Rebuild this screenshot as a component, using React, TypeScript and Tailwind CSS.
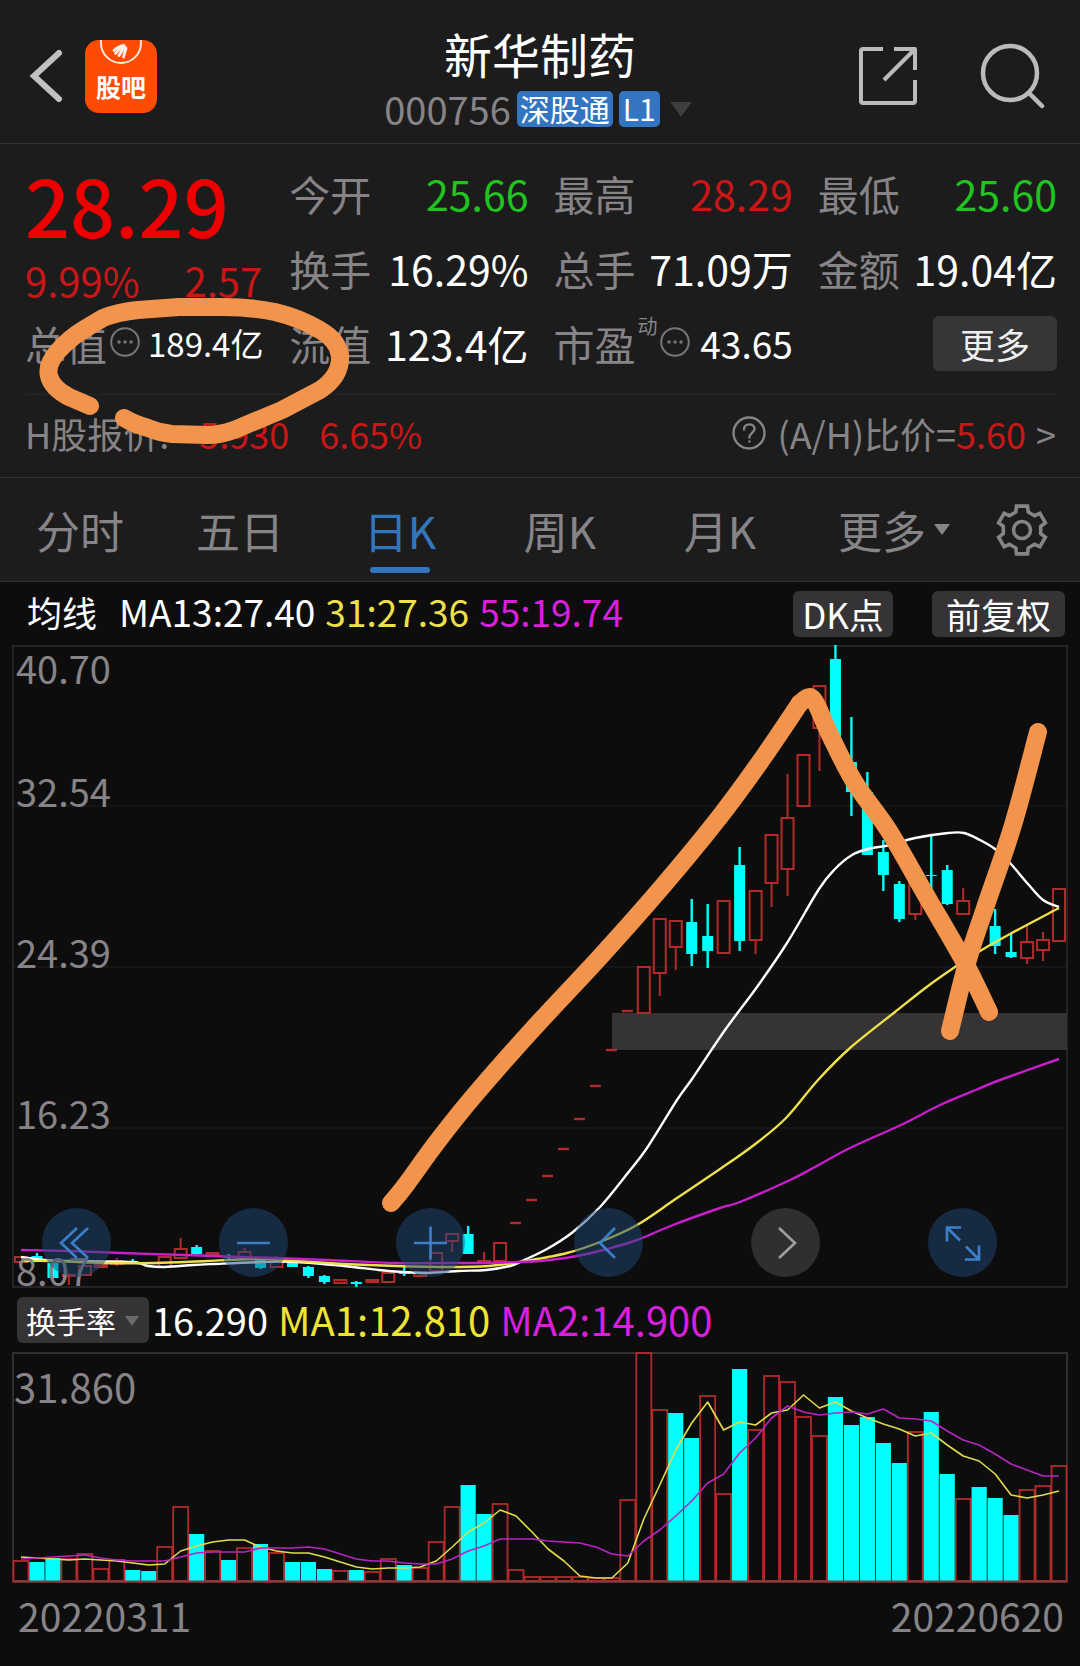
import React, { useState } from 'react';
import { clsx } from 'clsx';

const UP = '#b22a2a';
const DOWN = '#00ffff';
const MARKER = '#f2944c';

// Both plots share the same horizontal scale: 66 trading days
const DAYS = 66;
const PLOT_LEFT = 13;
const PLOT_RIGHT = 1067;
const SLOT = (PLOT_RIGHT - PLOT_LEFT) / DAYS;

type Side = 'up' | 'down';

// [day, side, high, body top, body bottom, low]
type Candle = [number, Side, number, number, number, number];

const CANDLES: Candle[] = [
    [0, 'up', 1257, 1257, 1262, 1262],
    [1, 'down', 1253, 1256, 1260, 1261],
    [2, 'down', 1263, 1263, 1278, 1278],
    [3, 'up', 1273, 1275, 1276, 1285],
    [4, 'up', 1265, 1266, 1275, 1275],
    [5, 'up', 1265, 1265, 1267, 1267],
    [6, 'up', 1258, 1261, 1264, 1266],
    [7, 'down', 1259, 1261, 1262, 1264],
    [9, 'up', 1257, 1257, 1267, 1267],
    [10, 'up', 1238, 1249, 1258, 1258],
    [11, 'down', 1245, 1247, 1254, 1255],
    [12, 'up', 1252, 1253, 1255, 1255],
    [13, 'down', 1254, 1256, 1258, 1261],
    [14, 'up', 1248, 1252, 1257, 1257],
    [15, 'down', 1257, 1257, 1268, 1269],
    [16, 'up', 1256, 1259, 1267, 1267],
    [17, 'down', 1262, 1262, 1267, 1267],
    [18, 'down', 1266, 1267, 1276, 1278],
    [19, 'down', 1275, 1276, 1282, 1284],
    [20, 'up', 1279, 1280, 1283, 1284],
    [21, 'down', 1281, 1282, 1284, 1287],
    [22, 'up', 1279, 1280, 1282, 1283],
    [23, 'up', 1271, 1273, 1282, 1282],
    [24, 'down', 1267, 1272, 1274, 1276],
    [25, 'up', 1271, 1272, 1276, 1276],
    [26, 'up', 1253, 1253, 1271, 1271],
    [27, 'up', 1234, 1234, 1241, 1252],
    [28, 'down', 1226, 1234, 1254, 1254],
    [29, 'up', 1252, 1261, 1262, 1262],
    [30, 'up', 1243, 1243, 1261, 1261],
    [31, 'up', 1223, 1223, 1223, 1223],
    [32, 'up', 1200, 1200, 1200, 1200],
    [33, 'up', 1176, 1176, 1176, 1176],
    [34, 'up', 1149, 1149, 1149, 1149],
    [35, 'up', 1119, 1119, 1119, 1119],
    [36, 'up', 1086, 1086, 1086, 1086],
    [37, 'up', 1050, 1050, 1050, 1050],
    [38, 'up', 1011, 1011, 1011, 1011],
    [39, 'up', 967, 967, 1013, 1013],
    [40, 'up', 919, 919, 973, 996],
    [41, 'up', 921, 921, 947, 970],
    [42, 'down', 899, 922, 954, 966],
    [43, 'down', 904, 936, 951, 968],
    [44, 'up', 901, 901, 953, 953],
    [45, 'down', 847, 865, 941, 951],
    [46, 'up', 891, 891, 940, 954],
    [47, 'up', 835, 835, 883, 907],
    [48, 'up', 774, 818, 869, 896],
    [49, 'up', 755, 755, 806, 806],
    [50, 'up', 686, 686, 728, 771],
    [51, 'down', 645, 659, 742, 742],
    [52, 'down', 717, 762, 792, 816],
    [53, 'down', 772, 792, 855, 855],
    [54, 'down', 840, 852, 875, 891],
    [55, 'down', 881, 884, 919, 922],
    [56, 'up', 865, 872, 914, 920],
    [57, 'down', 835, 875, 876, 892],
    [58, 'down', 865, 870, 904, 905],
    [59, 'up', 888, 901, 914, 914],
    [61, 'down', 909, 926, 946, 954],
    [62, 'down', 934, 952, 957, 958],
    [63, 'up', 926, 942, 958, 964],
    [64, 'up', 932, 940, 950, 961],
    [65, 'up', 889, 889, 941, 941],
];

const MA13 = '21,1257 45,1260 70,1261 131,1262 148,1266 165,1267 193,1265 213,1264 262,1262 296,1262 344,1266 379,1270 403,1272 427,1273 458,1271 486,1270 510,1266 522,1261 547,1249 573,1232 600,1207 627,1174 647,1148 677,1100 692,1079 725,1030 757,987 787,943 819,889 835,869 852,855 868,849 890,845 915,838 948,833 964,833 980,840 995,849 1010,863 1028,884 1043,900 1059,907';
const MA31 = '21,1261 52,1261 103,1263 155,1263 207,1261 258,1259 296,1261 344,1264 396,1266 448,1267 489,1266 520,1262 567,1253 600,1242 637,1225 677,1198 720,1169 754,1145 786,1118 818,1080 850,1048 895,1012 928,986 955,967 980,951 1010,934 1059,908';
const MA55 = '21,1250 69,1251 121,1253 183,1255 241,1257 275,1258 327,1260 396,1263 448,1263 482,1263 517,1262 540,1261 577,1256 607,1249 637,1240 673,1225 720,1208 740,1202 788,1181 815,1167 850,1148 903,1124 940,1105 978,1089 1000,1080 1059,1059';

// [side, top] for each day, bars stand on the bottom line of the plot
const TURNOVER: [Side, number][] = [
    ['up', 1561], ['down', 1562], ['down', 1558], ['up', 1559], ['up', 1554], ['up', 1569],
    ['up', 1560], ['down', 1570], ['down', 1571], ['up', 1547], ['up', 1507], ['down', 1534],
    ['up', 1551], ['down', 1560], ['up', 1548], ['down', 1544], ['up', 1553], ['down', 1562],
    ['down', 1562], ['down', 1569], ['up', 1571], ['down', 1570], ['up', 1572], ['up', 1559],
    ['down', 1565], ['up', 1568], ['up', 1542], ['up', 1507], ['down', 1485], ['down', 1514],
    ['up', 1504], ['up', 1570], ['up', 1577], ['up', 1577], ['up', 1577], ['up', 1577],
    ['up', 1578], ['up', 1578], ['up', 1500], ['up', 1353], ['up', 1410], ['down', 1413],
    ['down', 1438], ['up', 1396], ['up', 1494], ['down', 1369], ['up', 1430], ['up', 1376],
    ['up', 1382], ['up', 1417], ['up', 1436], ['down', 1397], ['down', 1425], ['down', 1417],
    ['down', 1443], ['down', 1463], ['up', 1432], ['down', 1412], ['down', 1474], ['up', 1499],
    ['down', 1487], ['down', 1498], ['down', 1515], ['up', 1490], ['up', 1486], ['up', 1466],
];

const TURNOVER_MA1 = [
    1557, 1558, 1559, 1560, 1559, 1560, 1561, 1563, 1565, 1564, 1551, 1546, 1542, 1540, 1540, 1547, 1551, 1553, 1553, 1557, 1562, 1567,
    1569, 1568, 1568, 1567, 1561, 1547, 1532, 1523, 1510, 1516, 1532, 1549, 1561, 1576, 1578, 1578, 1563, 1519, 1485, 1450, 1423, 1402,
    1430, 1422, 1425, 1413, 1410, 1395, 1408, 1402, 1411, 1418, 1424, 1429, 1436, 1433, 1445, 1456, 1461, 1474, 1495, 1498, 1495, 1491,
];
const TURNOVER_MA2 = [
    1559, 1558, 1557, 1556, 1555, 1558, 1560, 1561, 1561, 1561, 1557, 1553, 1552, 1552, 1552, 1548, 1548, 1548, 1547, 1549, 1554, 1559,
    1561, 1561, 1563, 1564, 1564, 1559, 1551, 1546, 1539, 1539, 1539, 1541, 1542, 1543, 1547, 1554, 1556, 1541, 1530, 1516, 1501, 1483,
    1474, 1453, 1438, 1418, 1406, 1412, 1415, 1413, 1412, 1414, 1409, 1418, 1419, 1421, 1431, 1440, 1445, 1454, 1464, 1470, 1476, 1476,
];

const centerOf = (day: number) => PLOT_LEFT + SLOT * (day + 0.5);
const toPoints = (values: number[]) => values.map((y, day) => `${centerOf(day)},${y}`).join(' ');

// Catmull-Rom spline through the points, as a path of cubic curves
const smooth = (points: string) => {
    const p = points.split(' ').map(pair => pair.split(',').map(Number));
    let d = `M${p[0][0]} ${p[0][1]}`;
    for (let i = 0; i < p.length - 1; i++) {
        const before = p[i - 1] ?? p[i];
        const after = p[i + 2] ?? p[i + 1];
        const c1 = [p[i][0] + (p[i + 1][0] - before[0]) / 6, p[i][1] + (p[i + 1][1] - before[1]) / 6];
        const c2 = [p[i + 1][0] - (after[0] - p[i][0]) / 6, p[i + 1][1] - (after[1] - p[i][1]) / 6];
        d += `C${c1.join(' ')} ${c2.join(' ')} ${p[i + 1].join(' ')}`;
    }
    return d;
};

const TABS = ['分时', '五日', '日K', '周K', '月K'];

const Caret: React.FC<{ className?: string }> = ({ className }) => (
    <svg viewBox="0 0 20 14" className={className} fill="currentColor" aria-hidden="true">
        <path d="M0 0h20L10 14z" />
    </svg>
);

const DotsIcon: React.FC = () => (
    <svg viewBox="0 0 30 30" className="size-[30px] shrink-0 text-[#777577]" fill="none" stroke="currentColor" strokeWidth="2" aria-hidden="true">
        <circle cx="15" cy="15" r="13.8" />
        <path d="M9 15h.1M15 15h.1M21 15h.1" strokeWidth="3.4" strokeLinecap="round" />
    </svg>
);

const BoardLogo: React.FC = () => (
    <svg viewBox="0 0 72 73" className="w-[72px] h-[73px]" role="img" aria-label="股吧">
        <rect width="72" height="73" rx="14" fill="#ff4b04" />
        <path d="M16 0v3a20 20 0 0 0 40 0V0" fill="none" stroke="#ffe9dd" strokeWidth="2" />
        <g fill="none" stroke="#fff3ec" strokeWidth="2.8" strokeLinecap="round">
            <path d="M29 10.500q4-4 10-5" />
            <path d="M30.500 13.500q3.500-4.500 8.500-7" />
            <path d="M34 15.500q2.500-4.500 6-8.500" />
            <path d="M38.500 17q1.500-5 2.500-9" />
        </g>
        <text x="36" y="57" textAnchor="middle" fontSize="25" fontWeight="700" fill="#fff">股吧</text>
    </svg>
);

const GearIcon: React.FC = () => {
    const point = (deg: number, r: number) => {
        const rad = (deg * Math.PI) / 180;
        return `${(27 + r * Math.sin(rad)).toFixed(1)},${(27 - r * Math.cos(rad)).toFixed(1)}`;
    };
    const outline = [0, 60, 120, 180, 240, 300]
        .flatMap(a => [point(a - 19, 19), point(a - 13, 24.5), point(a + 13, 24.5), point(a + 19, 19)])
        .join(' ');
    return (
        <svg viewBox="0 0 54 54" className="size-[54px]" fill="none" stroke="currentColor" strokeWidth="3.600" aria-hidden="true">
            <polygon points={outline} />
            <circle cx="27" cy="27" r="8.5" />
        </svg>
    );
};

const Header: React.FC = () => (
    <header className="grid grid-cols-[1fr_auto_1fr] h-[144px] pl-7 pr-[34px] border-b border-[#353435]">
        <div className="flex items-center gap-[21px] pt-[9px]">
            <button type="button" aria-label="返回" className="text-[#c2c1c2]">
                <svg viewBox="0 0 36 56" className="w-[36px] h-[56px]" fill="none" stroke="currentColor" strokeWidth="6" strokeLinecap="round">
                    <path d="M31 5L6 28l25 23" />
                </svg>
            </button>
            <a href="#guba"><BoardLogo /></a>
        </div>
        <div className="flex flex-col items-center pt-[25px]">
            <h1 className="pl-[6px] text-[48px] leading-[56px] text-white">新华制药</h1>
            <div className="flex items-center gap-[6px] mt-[10px] pl-[2px]">
                <span className="text-[38px] leading-[36px] text-[#868486]">000756</span>
                <span className="h-[36px] px-[3px] rounded-[5px] bg-[#3375c0] text-[30px] leading-[34px] text-white">深股通</span>
                <span className="h-[36px] px-1 rounded-[5px] bg-[#3375c0] text-[30px] leading-[34px] text-white">L1</span>
                <button type="button" aria-label="切换股票" className="pl-1 text-[#3f3e3f]">
                    <Caret className="w-[22px] h-[15px]" />
                </button>
            </div>
        </div>
        <div className="flex items-center justify-end gap-[61px] pt-[9px] text-[#bcbbbc]">
            <button type="button" aria-label="分享">
                <svg viewBox="0 0 62 60" className="w-[62px] h-[60px]" fill="none" stroke="currentColor" strokeWidth="4" strokeLinejoin="round">
                    <path d="M26 3H6a2 2 0 0 0-2 2v50a2 2 0 0 0 2 2h50a2 2 0 0 0 2-2V34" />
                    <path d="M37 3h21v21M57 4L27 34" />
                </svg>
            </button>
            <button type="button" aria-label="搜索">
                <svg viewBox="0 0 66 66" className="size-[66px]" fill="none" stroke="currentColor" strokeWidth="4.5" strokeLinecap="round">
                    <circle cx="30" cy="30" r="27" />
                    <path d="M49 50l13 13" />
                </svg>
            </button>
        </div>
    </header>
);

interface QuoteItemProps {
    label: string;
    value: string;
    tone?: 'red' | 'green' | 'white';
}

const QuoteItem: React.FC<QuoteItemProps> = ({ label, value, tone = 'white' }) => (
    <div className="flex items-center justify-between whitespace-nowrap text-[41px]">
        <span className="text-[#868486]">{label}</span>
        <span
            className={clsx(
                tone === 'red' && 'text-[#c91616]',
                tone === 'green' && 'text-[#1fc41f]',
                tone === 'white' && 'text-white'
            )}
        >
            {value}
        </span>
    </div>
);

const Quote: React.FC = () => (
    <section className="relative">
        <div className="ml-[25px] mr-[23px] pt-[12px] pb-[13px] grid grid-cols-4 auto-rows-[75px] gap-x-[25px] border-b border-[#272627]">
            <div className="row-span-2 flex flex-col whitespace-nowrap">
                <strong className="text-[79px] leading-[96px] font-medium text-[#ee0000]">28.29</strong>
                <div className="flex justify-between pr-[2px] text-[40px] leading-[56px] text-[#c91616]">
                    <span>9.99%</span>
                    <span>2.57</span>
                </div>
            </div>
            <QuoteItem label="今开" value="25.66" tone="green" />
            <QuoteItem label="最高" value="28.29" tone="red" />
            <QuoteItem label="最低" value="25.60" tone="green" />
            <QuoteItem label="换手" value="16.29%" />
            <QuoteItem label="总手" value="71.09万" />
            <QuoteItem label="金额" value="19.04亿" />

            <div className="flex items-center whitespace-nowrap">
                <span className="text-[41px] text-[#868486]">总值</span>
                <span className="pl-[3px] pb-1"><DotsIcon /></span>
                <span className="pl-2 text-[33px] text-white">189.4亿</span>
            </div>
            <QuoteItem label="流值" value="123.4亿" />
            <div className="flex items-center justify-between whitespace-nowrap">
                <div className="flex items-center">
                    <span className="text-[41px] text-[#868486]">市盈</span>
                    <sup className="px-[2px] mb-4 text-[20px] text-[#868486]">动</sup>
                    <span className="pb-1"><DotsIcon /></span>
                </div>
                <span className="text-[37px] text-white">43.65</span>
            </div>
            <div className="flex items-center justify-end">
                <button type="button" className="w-[124px] h-[55px] rounded-md bg-[#363537] text-[35px] leading-[50px] text-[#eeeeee]">更多</button>
            </div>
        </div>

        <div className="flex items-center justify-between h-[83px] pl-[25px] pr-[24px] pb-[6px] border-b border-[#353435] text-[36px] whitespace-nowrap">
            <div className="flex items-center">
                <span className="text-[#868486]">H股报价:</span>
                <span className="pl-[30px] text-[#c91616]">5.930</span>
                <span className="pl-[30px] text-[#c91616]">6.65%</span>
            </div>
            <a href="#ah" className="flex items-center text-[#868486]">
                <svg viewBox="0 0 34 34" className="size-[34px] mr-3" fill="none" stroke="currentColor" strokeWidth="2.4" aria-hidden="true">
                    <circle cx="17" cy="17" r="15.5" />
                    <path d="M12 13.5c0-7 10.500-6.500 10.500-.5 0 3.500-5 4-5 8.500" strokeLinecap="round" />
                    <circle cx="17.400" cy="25.500" r="1.200" fill="currentColor" stroke="none" />
                </svg>
                <span>(A/H)比价=</span>
                <span className="text-[#c91616]">5.60</span>
                <span className="pl-[10px]">&gt;</span>
            </a>
        </div>

        {/* hand-drawn ring round the market value */}
        <svg viewBox="0 144 1080 334" className="absolute inset-x-0 top-0 w-full pointer-events-none" fill="none" stroke={MARKER} strokeWidth="18" strokeLinecap="round" strokeLinejoin="round" aria-hidden="true">
            <path d="M90 406L69 397Q52 388 49 376Q46 364 59 350Q70 338 83 330L103 318Q118 312 138 310L179 307H224Q250 307 275 312Q300 318 320 330Q338 340 340 356Q341 376 320 390L282 410L234 430Q220 435 207 435L172 434Q160 433 148 428Q134 424 124 418" />
        </svg>
    </section>
);

const PeriodTabs: React.FC = () => {
    const [active, setActive] = useState('日K');
    return (
        <nav className="flex h-[104px] border-b border-[#353435] text-[44px] text-[#868486]">
            {TABS.map(tab => (
                <button
                    key={tab}
                    type="button"
                    onClick={() => setActive(tab)}
                    className={clsx('basis-[160px] grow flex flex-col items-center justify-between pt-[22px] pb-2', active === tab && 'text-[#3277bd]')}
                >
                    <span className="leading-[60px]">{tab}</span>
                    <span className={clsx('w-[60px] h-[6px] rounded-full', active === tab && 'bg-[#3277bd]')} />
                </button>
            ))}
            <button type="button" className="basis-[176px] flex items-start justify-center gap-2 pt-[22px] pl-3">
                <span className="leading-[60px]">更多</span>
                <Caret className="w-[16px] h-[13px] mt-[23px]" />
            </button>
            <button type="button" aria-label="设置" className="basis-[104px] flex items-center pl-[19px]">
                <GearIcon />
            </button>
        </nav>
    );
};

const CandleShape: React.FC<{ candle: Candle }> = ({ candle: [day, side, high, top, bottom, low] }) => {
    const x = centerOf(day);
    if (side === 'down') {
        return (
            <g fill={DOWN} stroke={DOWN}>
                <path d={`M${x} ${high}V${low}`} strokeWidth="2.4" />
                <rect x={x - 5.5} y={top} width="11" height={Math.max(bottom - top, 1)} stroke="none" />
            </g>
        );
    }
    if (top === bottom) {
        return <path d={`M${x - 6} ${top}h11`} stroke={UP} strokeWidth="2.4" />;
    }
    return (
        <g fill="none" stroke={UP} strokeWidth="2">
            <path d={`M${x} ${high}V${top}M${x} ${bottom}V${low}`} />
            <rect x={x - 6} y={top} width="12" height={bottom - top} />
        </g>
    );
};

const PriceChart: React.FC = () => (
    <svg viewBox="0 645 1080 643" className="block w-full overflow-visible" fill="none" role="img" aria-label="日K线图">
        <g stroke="#18171a" strokeWidth="1.500">
            <path d="M13 806H1067M13 967H1067M13 1128H1067" />
        </g>
        <path d="M13 646H1067V1287H13z" stroke="#242325" strokeWidth="2" />
        <rect x="612" y="1013" width="455" height="37" fill="#353334" />
        {CANDLES.map(candle => <CandleShape key={candle[0]} candle={candle} />)}
        <g strokeWidth="2.400" strokeLinejoin="round">
            <path d={smooth(MA13)} stroke="#ffffff" />
            <path d={smooth(MA31)} stroke="#ede04a" />
            <path d={smooth(MA55)} stroke="#c81ecb" />
        </g>
        <g fill="#868486" fontSize="38">
            <text x="16" y="684">40.70</text>
            <text x="16" y="807">32.54</text>
            <text x="16" y="968">24.39</text>
            <text x="16" y="1129">16.23</text>
            <text x="16" y="1286">8.07</text>
        </g>
        <g stroke={MARKER} strokeWidth="18" strokeLinecap="round" strokeLinejoin="round">
            <path d={smooth('391,1203 405,1186 437,1142 473,1097 532,1030 600,957 662,887 718,819 760,762 800,703')} />
            <path d={smooth('800,703 813,699 830,735 855,783 889,831 927,897 965,963 989,1012')} />
            <path d={smooth('1038,732 1013,825 985,908 967,963 950,1031')} />
        </g>
    </svg>
);

const CHART_BUTTONS = [
    { label: '最早', icon: <path d="M35 20L19 35l16 15M46 20L30 35l16 15" /> },
    { label: '缩小', icon: <path d="M18 35h33" /> },
    { label: '放大', icon: <path d="M18 35h33M34.500 18.500v33" /> },
    { label: '向前', icon: <path d="M41 20L26 35l15 15" /> },
    { label: '向后', icon: <path d="M28 20l16 15-16 15" />, muted: true },
    { label: '全屏', icon: <path d="M33 19.500H19v14M20 20.500l12 12M37 51.500h14v-14M50 50.500l-12-12" /> },
];

const ChartControls: React.FC = () => (
    <div className="absolute inset-x-0 bottom-[11px] flex justify-between pl-[42px] pr-[83px]">
        {CHART_BUTTONS.map(({ label, icon, muted }) => (
            <button
                key={label}
                type="button"
                aria-label={label}
                disabled={muted}
                className={clsx('size-[69px] rounded-full', muted ? 'bg-[#2f2e30] text-[#a09fa0]' : 'bg-[#1d4775]/50 text-[#3b80cb]')}
            >
                <svg viewBox="0 0 69 69" className="size-full" fill="none" stroke="currentColor" strokeWidth="2.600">{icon}</svg>
            </button>
        ))}
    </div>
);

const TurnoverChart: React.FC = () => (
    <svg viewBox="0 1352 1080 231" className="block w-full overflow-visible" fill="none" role="img" aria-label="换手率">
        <path d="M13 1353H1067V1582H13z" stroke="#3b3a3c" strokeWidth="1.500" />
        {TURNOVER.map(([side, top], day) => {
            const x = PLOT_LEFT + SLOT * day;
            return side === 'down'
                ? <rect key={day} x={x + 0.4} y={top} width={SLOT - 0.8} height={1581 - top} fill={DOWN} />
                : <rect key={day} x={x + 0.5} y={top} width={SLOT - 1} height={1581 - top} stroke={UP} strokeWidth="1.800" />;
        })}
        <path d="M13 1581.500H1067" stroke="#8f3a3a" strokeWidth="1.800" />
        <g strokeWidth="1.600" strokeLinejoin="round">
            <polyline points={toPoints(TURNOVER_MA1)} stroke="#e0dc4e" />
            <polyline points={toPoints(TURNOVER_MA2)} stroke="#b726c0" />
        </g>
        <text x="14" y="1403" fill="#868486" fontSize="40">31.860</text>
    </svg>
);

export default function App() {
    return (
        <div
            lang="zh-CN"
            className="min-h-screen bg-[#0e0d0e] font-['Noto_Sans_CJK_SC',sans-serif] text-white"
        >
            <div className="bg-[#1d1c1d]">
                <Header />
                <Quote />
                <PeriodTabs />
            </div>

            <main>
                <div className="flex items-center h-[63px] pl-[27px] pr-[15px] text-[37px] whitespace-nowrap">
                    <span className="pb-[3px] text-[35px]">均线</span>
                    <span className="pb-[3px] pl-[22px]">MA13:27.40</span>
                    <span className="pb-[3px] pl-[10px] text-[#ede04a]">31:27.36</span>
                    <span className="pb-[3px] pl-[10px] text-[#d81fdb]">55:19.74</span>
                    <div className="flex gap-[39px] ml-auto text-[35px] leading-[42px]">
                        <button type="button" className="w-[100px] h-[46px] rounded-md bg-[#353336]">DK点</button>
                        <button type="button" className="w-[133px] h-[46px] rounded-md bg-[#353336]">前复权</button>
                    </div>
                </div>

                <div className="relative">
                    <PriceChart />
                    <ChartControls />
                </div>

                <div className="flex items-center h-[64px] pl-[17px] text-[40px] whitespace-nowrap">
                    <div className="relative">
                        <select aria-label="指标" className="block appearance-none w-[132px] h-[46px] pl-[9px] rounded-md bg-[#353336] text-[30px] leading-[44px] text-white">
                            <option>换手率</option>
                            <option>成交量</option>
                        </select>
                        <Caret className="absolute right-[10px] top-[18px] w-[14px] h-[12px] text-[#6b696c] pointer-events-none" />
                    </div>
                    <span className="pb-[2px] pl-[3px] text-[38px]">16.290</span>
                    <span className="pb-[2px] pl-[10px] text-[#f0e433]">MA1:12.810</span>
                    <span className="pb-[2px] pl-[10px] text-[#d81fdb]">MA2:14.900</span>
                </div>

                <TurnoverChart />

                <div className="flex justify-between pl-[18px] pr-[16px] pt-[2px] text-[39px] leading-[60px] text-[#868486]">
                    <time dateTime="2022-03-11">20220311</time>
                    <time dateTime="2022-06-20">20220620</time>
                </div>
            </main>
        </div>
    );
}
